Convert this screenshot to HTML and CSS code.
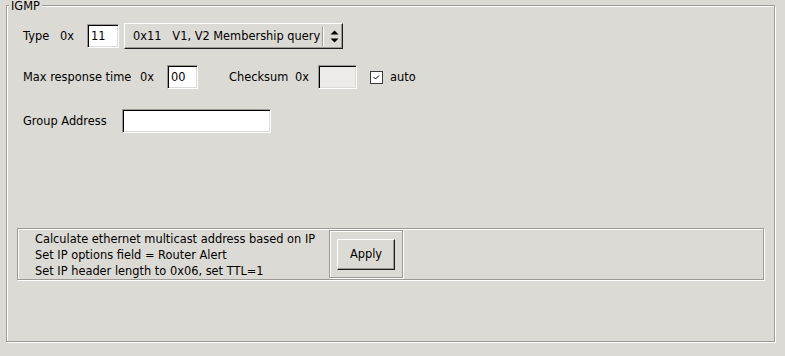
FILE: index.html
```html
<!DOCTYPE html>
<html lang="en">
<head>
    <meta charset="UTF-8">
    <title>IGMP</title>
    <link rel="stylesheet" href="styles.css">
</head>
<body>
    <div class="group">
        <div class="legend">IGMP</div>

        <div class="row row-type">
            <span class="lbl w-type">Type</span>
            <span class="lbl w-hex">0x</span>
            <input class="field w-type-in" type="text" value="11">
            <div class="combo">
                <span class="combo-text">0x11&nbsp;&nbsp;&nbsp;V1, V2 Membership query</span>
                <span class="combo-sep"></span>
                <svg class="combo-arrows" width="9" height="13" viewBox="0 0 9 13">
                    <path d="M0.5 4.5 L4.5 0.5 L8.5 4.5 Z" fill="#000"/>
                    <path d="M0.5 8.5 L4.5 12.5 L8.5 8.5 Z" fill="#000"/>
                </svg>
            </div>
        </div>

        <div class="row row-max">
            <span class="lbl w-max">Max response time</span>
            <span class="lbl w-hex">0x</span>
            <input class="field w-max-in" type="text" value="00">
            <span class="lbl w-chk">Checksum</span>
            <span class="lbl w-hex2">0x</span>
            <input class="field field-off w-chk-in" type="text" disabled>
            <span class="checkbox">
                <svg width="11" height="11" viewBox="0 0 11 11">
                    <path d="M2.5 5 L4.5 7 L8 3.5" fill="none" stroke="#000" stroke-width="1"/>
                </svg>
            </span>
            <span class="lbl auto">auto</span>
        </div>

        <div class="row row-group">
            <span class="lbl w-grp">Group Address</span>
            <input class="field w-grp-in" type="text">
        </div>

        <div class="helper">
            <div class="helper-text">
                <div>Calculate ethernet multicast address based on IP</div>
                <div>Set IP options field = Router Alert</div>
                <div>Set IP header length to 0x06, set TTL=1</div>
            </div>
            <div class="helper-btn">
                <button class="btn" type="button">Apply</button>
            </div>
        </div>
    </div>
</body>
</html>
```

FILE: styles.css
```css
body {
    margin: 0;
    width: 785px;
    height: 356px;
    background-color: #dcdad5;
    font-family: "DejaVu Sans", sans-serif;
    font-size: 11.4px;
    color: #000;
    overflow: hidden;
}

/* etched frames */
.group,
.helper,
.helper-btn {
    box-sizing: border-box;
    border: 1px solid #9d9a96;
    box-shadow: inset 1px 1px 0 #fff, 1px 1px 0 #fff;
}

.group {
    margin: 5px 0 0 6px;
    width: 769px;
    height: 337px;
}

.legend {
    width: max-content;
    margin: -6px 0 0 2px;
    padding: 0 2px;
    height: 12px;
    line-height: 12px;
    background-color: #dcdad5;
    position: relative;
}

.row {
    display: flex;
    align-items: center;
    margin-left: 16px;
}

.row-type {
    margin-top: 11px;
    height: 26px;
}

.row-max {
    margin-top: 16px;
    height: 24px;
}

.row-group {
    margin-top: 20px;
    height: 24px;
}

.lbl {
    white-space: nowrap;
}

.w-type { width: 37px; }
.w-hex { width: 27px; }
.w-max { width: 117px; }
.w-chk { width: 66px; margin-left: 31px; }
.w-hex2 { width: 23px; }
.w-grp { width: 99px; }

/* sunken entry */
.field {
    box-sizing: border-box;
    height: 24px;
    margin: 0;
    padding: 0 0 0 3px;
    font-family: inherit;
    font-size: 11.4px;
    color: #000;
    background-color: #fff;
    border: 1px solid;
    border-color: #9d9a96 #fff #fff #9d9a96;
    box-shadow: inset 1px 1px 0 #000, inset -1px -1px 0 #dcdad5;
    outline: none;
}

.field-off {
    background-color: #edebe8;
}

.w-type-in { width: 32px; }
.w-max-in { width: 31px; }
.w-chk-in { width: 39px; }
.w-grp-in { width: 149px; }

/* option menu */
.combo {
    box-sizing: border-box;
    display: flex;
    align-items: center;
    width: 219px;
    height: 26px;
    margin-left: 5px;
    padding-left: 8px;
    border: 1px solid;
    border-color: #fff #1c1c1c #1c1c1c #fff;
    box-shadow: inset -1px -1px 0 #9d9a96;
}

.combo-text {
    width: 189px;
    white-space: nowrap;
    overflow: hidden;
}

.combo-sep {
    width: 1px;
    height: 19px;
    background-color: #9d9a96;
    border-right: 1px solid #fff;
}

.combo-arrows {
    margin-left: 6px;
}

.checkbox {
    box-sizing: border-box;
    display: flex;
    width: 13px;
    height: 13px;
    margin-left: 13px;
    background-color: #fff;
    border: 1px solid #3a3a3a;
}

.auto {
    margin-left: 7px;
}

/* bottom helper box */
.helper {
    display: flex;
    width: 747px;
    height: 52px;
    margin: 95px 0 0 10px;
}

.helper-text {
    width: 311px;
    padding: 2px 0 0 17px;
    box-sizing: border-box;
    line-height: 16px;
    white-space: nowrap;
}

.helper-btn {
    display: flex;
    align-items: center;
    justify-content: center;
    width: 74px;
    height: 48px;
    margin-top: 1px;
}

.btn {
    box-sizing: border-box;
    width: 58px;
    height: 31px;
    padding: 0;
    font-family: inherit;
    font-size: 11.4px;
    color: #000;
    background-color: #dcdad5;
    border: 1px solid;
    border-color: #fff #1c1c1c #1c1c1c #fff;
    box-shadow: inset -1px -1px 0 #9d9a96;
    border-radius: 0;
}
```
